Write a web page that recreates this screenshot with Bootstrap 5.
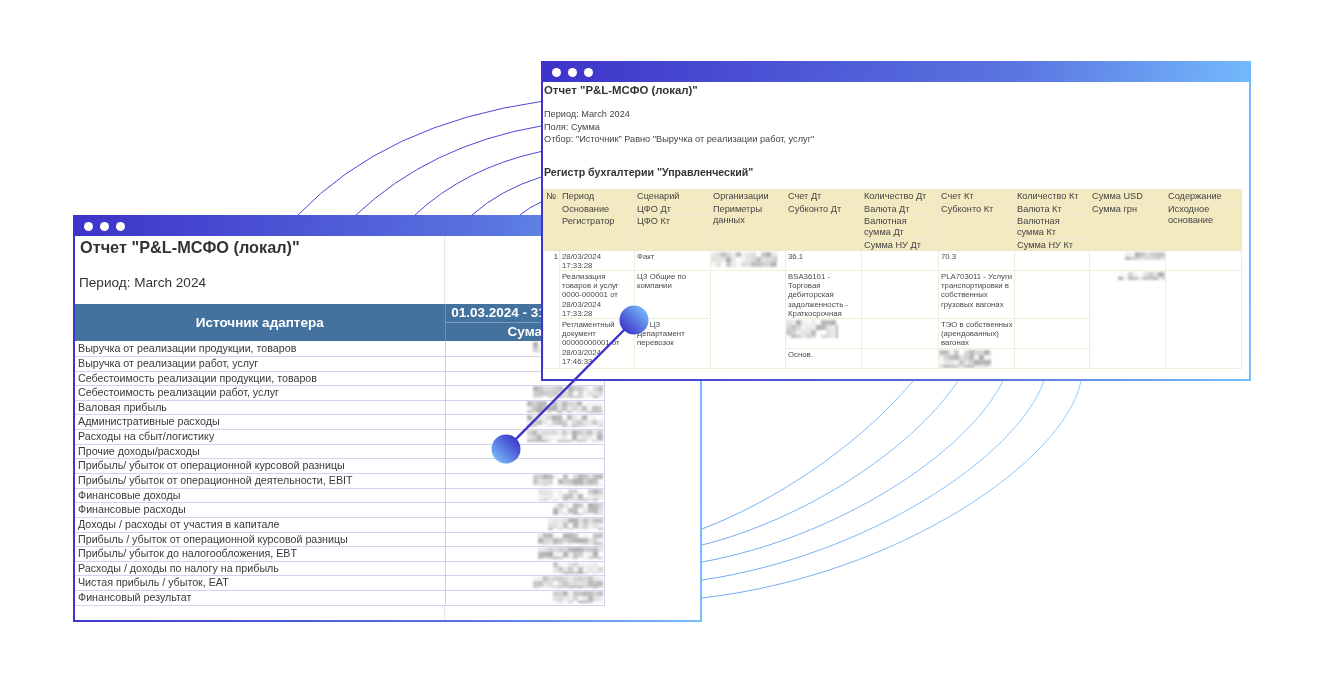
<!DOCTYPE html>
<html lang="ru">
<head>
<meta charset="utf-8">
<title>Отчет P&amp;L-МСФО</title>
<link href="https://cdn.jsdelivr.net/npm/bootstrap@5.3.0/dist/css/bootstrap.min.css" rel="stylesheet">
<style>
html,body{height:100%;margin:0;background:#fff;overflow:hidden}
body{font-family:"Liberation Sans",Arial,sans-serif;color:#333}
.stage{width:1324px;height:691px}
.wires{left:0;top:0;z-index:0}
.wires-top{left:0;top:0;z-index:5;pointer-events:none}
.win{background:linear-gradient(94deg,#3d33c9 0%,#5a75e0 65%,#76bfff 100%);padding:0 2px 2px}
.win-a{left:73px;top:215px;width:629px;height:407px;z-index:1}
.win-b{left:541px;top:61px;width:710px;height:320px;z-index:2}
.titlebar{height:21px;padding:1px 0 0 9px;gap:7px}
.win-dot{width:9px;height:9px;border-radius:50%;background:#fff}
.win-body{background:#fff;height:calc(100% - 21px);overflow:hidden}
.soft{filter:blur(.3px)}
.a-head{height:68px;color:#333}
.a-headl{width:370px;border-right:1px solid #e4e4ee;padding:2px 0 0 5px}
.a-title{font-size:16.3px;font-weight:700;line-height:19px;margin:0}
.a-period{font-size:13.6px;line-height:17px;margin:17px 0 0 -1px}
.a-table{table-layout:fixed;width:529px;font-size:10.7px;line-height:13px}
.a-table th{background:#44729f;color:#fff;font-weight:700;font-size:13.5px;text-align:center;line-height:17px;padding:0}
.a-table .th-top{height:18px;border-bottom:1px solid #7a9cbd}
.a-table .th-sub{height:19px}
.a-table .th-name{border-right:1px solid #6d92b5}
.a-table td{height:15px;padding:0 0 0 3px;border-bottom:1px solid #d2d2ea;white-space:nowrap;overflow:hidden;color:#3a3a3a}
.a-table tbody tr:nth-child(3) td,.a-table tbody tr:nth-child(5) td,.a-table tbody tr:nth-child(8) td,.a-table tbody tr:nth-child(11) td,.a-table tbody tr:nth-child(14) td,.a-table tbody tr:nth-child(16) td{height:14px}
.a-table td.val{border-left:1px solid #cfcfe6;border-right:1px solid #cfcfe6;padding:0 1px 0 0;text-align:right}
.a-foot{width:370px;border-right:1px solid #e4e4ee}
.b-body{color:#444;padding:0}
.b-title{font-size:11.4px;font-weight:700;line-height:14px;margin:1px 0 0 1px;color:#333}
.b-lines{font-size:9.2px;line-height:12.5px;margin:11px 0 0 1px}
.b-lines p{margin:0}
.b-reg{font-size:10.6px;font-weight:700;line-height:14px;margin:19px 0 0 1px;color:#333}
.b-table{table-layout:fixed;width:698px;margin-top:10px;border-collapse:collapse}
.b-table th,.b-table td{border:1px solid #ece6cc;vertical-align:top;padding:0 0 0 2px;overflow:hidden;white-space:nowrap}
.b-table th{background:#f3eac2;font-weight:400;font-size:9.2px;line-height:11px;color:#444}
.b-table td{font-size:7.8px;line-height:9.2px;color:#4a4a4a;border-color:#f0edda;padding-top:1px}
.h1{height:14px}.h2{height:12px}.h3{height:24px}.h4{height:11px}
.b-table .h1 th{padding-top:1px}
.b-table .h4 th{line-height:10px}
.r1{height:20px}.r2{height:48px}.r3{height:29px}.r4{height:20px}
.num{text-align:right}
.b-table td.num{padding-right:1px}
.b-table td.cell-smear{padding:1px 0 0}
.b-table td.cell-smear-r{padding:1px 0 0;text-align:right}
.smear{display:inline-block;vertical-align:top;filter:blur(.9px);overflow:hidden}
.smear i{display:block;float:left;width:5px;height:5px}
</style>
</head>
<body>
<div class="stage position-relative">

<svg class="wires position-absolute" width="1324" height="691" fill="none">
  <defs>
    <linearGradient id="wl" gradientUnits="userSpaceOnUse" x1="702" y1="600" x2="1081" y2="381">
      <stop offset="0" stop-color="#74a6ec"/><stop offset="1" stop-color="#93d1ff"/>
    </linearGradient>
  </defs>
  <g stroke="#4c48d8" stroke-width="1">
    <path d="M298 215Q385 124 541 101.5"/>
    <path d="M356 215Q430 145 541 126"/>
    <path d="M415 215Q465 168 541 151.5"/>
    <path d="M472 215Q500 190 541 177"/>
    <path d="M520 215Q528 208 541 202"/>
  </g>
  <g stroke="url(#wl)" stroke-width="1">
    <path d="M913 381C855 450 770 503 702 529"/>
    <path d="M958 381C910 452 802 520 702 545"/>
    <path d="M1003 381C966 455 835 538 702 562"/>
    <path d="M1044 381C1017 457 867 556 702 580"/>
    <path d="M1081 381C1065 460 900 575 702 598"/>
  </g>
</svg>

<section class="win win-a position-absolute">
  <div class="titlebar d-flex align-items-center"><span class="win-dot"></span><span class="win-dot"></span><span class="win-dot"></span></div>
  <div class="win-body soft d-flex flex-column">
    <div class="a-head d-flex flex-shrink-0">
      <div class="a-headl">
        <h1 class="a-title">Отчет "P&amp;L-МСФО (локал)"</h1>
        <p class="a-period">Период: March 2024</p>
      </div>
    </div>
    <table class="a-table flex-shrink-0">
      <colgroup><col style="width:370px"><col style="width:159px"></colgroup>
      <thead>
        <tr><th rowspan="2" class="th-name">Источник адаптера</th><th class="th-top">01.03.2024 - 31.03.2024</th></tr>
        <tr><th class="th-sub">Сума</th></tr>
      </thead>
      <tbody>
        <tr><td>Выручка от реализации продукции, товаров</td><td class="val"><span class="smear" data-w="70" data-h="12"></span></td></tr>
        <tr><td>Выручка от реализации работ, услуг</td><td class="val"></td></tr>
        <tr><td>Себестоимость реализации продукции, товаров</td><td class="val"></td></tr>
        <tr><td>Себестоимость реализации работ, услуг</td><td class="val"><span class="smear" data-w="70" data-h="12"></span></td></tr>
        <tr><td>Валовая прибыль</td><td class="val"><span class="smear" data-w="76" data-h="12"></span></td></tr>
        <tr><td>Административные расходы</td><td class="val"><span class="smear" data-w="76" data-h="12"></span></td></tr>
        <tr><td>Расходы на сбыт/логистику</td><td class="val"><span class="smear" data-w="76" data-h="12"></span></td></tr>
        <tr><td>Прочие доходы/расходы</td><td class="val"></td></tr>
        <tr><td>Прибыль/ убыток от операционной курсовой разницы</td><td class="val"></td></tr>
        <tr><td>Прибыль/ убыток от операционной деятельности, EBIT</td><td class="val"><span class="smear" data-w="70" data-h="12"></span></td></tr>
        <tr><td>Финансовые доходы</td><td class="val"><span class="smear" data-w="65" data-h="12"></span></td></tr>
        <tr><td>Финансовые расходы</td><td class="val"><span class="smear" data-w="50" data-h="12"></span></td></tr>
        <tr><td>Доходы / расходы от участия в капитале</td><td class="val"><span class="smear" data-w="55" data-h="12"></span></td></tr>
        <tr><td>Прибыль / убыток от операционной курсовой разницы</td><td class="val"><span class="smear" data-w="65" data-h="12"></span></td></tr>
        <tr><td>Прибыль/ убыток до налогообложения, EBT</td><td class="val"><span class="smear" data-w="65" data-h="12"></span></td></tr>
        <tr><td>Расходы / доходы по налогу на прибыль</td><td class="val"><span class="smear" data-w="50" data-h="12"></span></td></tr>
        <tr><td>Чистая прибыль / убыток, EAT</td><td class="val"><span class="smear" data-w="70" data-h="12"></span></td></tr>
        <tr><td>Финансовый результат</td><td class="val"><span class="smear" data-w="50" data-h="12"></span></td></tr>
      </tbody>
    </table>
    <div class="a-foot flex-grow-1"></div>
  </div>
</section>

<section class="win win-b position-absolute">
  <div class="titlebar d-flex align-items-center"><span class="win-dot"></span><span class="win-dot"></span><span class="win-dot"></span></div>
  <div class="win-body soft b-body">
    <h2 class="b-title">Отчет "P&amp;L-МСФО (локал)"</h2>
    <div class="b-lines">
      <p>Период: March 2024</p>
      <p>Поля: Сумма</p>
      <p>Отбор: "Источник" Равно "Выручка от реализации работ, услуг"</p>
    </div>
    <h3 class="b-reg">Регистр бухгалтерии "Управленческий"</h3>
    <table class="b-table">
      <colgroup>
        <col style="width:16px"><col style="width:75px"><col style="width:76px"><col style="width:75px"><col style="width:76px">
        <col style="width:77px"><col style="width:76px"><col style="width:75px"><col style="width:76px"><col style="width:76px">
      </colgroup>
      <thead>
        <tr class="h1"><th rowspan="4">№</th><th>Период</th><th>Сценарий</th><th>Организации</th><th>Счет Дт</th><th>Количество Дт</th><th>Счет Кт</th><th>Количество Кт</th><th>Сумма USD</th><th>Содержание</th></tr>
        <tr class="h2"><th>Основание</th><th>ЦФО Дт</th><th rowspan="3">Периметры<br>данных</th><th rowspan="3">Субконто Дт</th><th>Валюта Дт</th><th rowspan="3">Субконто Кт</th><th>Валюта Кт</th><th rowspan="3">Сумма грн</th><th rowspan="3">Исходное<br>основание</th></tr>
        <tr class="h3"><th rowspan="2">Регистратор</th><th rowspan="2">ЦФО Кт</th><th>Валютная<br>сумма Дт</th><th>Валютная<br>сумма Кт</th></tr>
        <tr class="h4"><th>Сумма НУ Дт</th><th>Сумма НУ Кт</th></tr>
      </thead>
      <tbody>
        <tr class="r1"><td rowspan="4" class="num">1</td><td>28/03/2024<br>17:33:28</td><td>Факт</td><td class="cell-smear"><span class="smear" data-w="66" data-h="15"></span></td><td>36.1</td><td></td><td>70.3</td><td></td><td class="cell-smear-r"><span class="smear" data-w="40" data-h="8"></span></td><td></td></tr>
        <tr class="r2"><td>Реализация<br>товаров и услуг<br>0000-000001 от<br>28/03/2024<br>17:33:28</td><td>ЦЗ Общие по<br>компании</td><td rowspan="3"></td><td>BSA36101 -<br>Торговая<br>дебиторская<br>задолженность -<br>Краткосрочная</td><td></td><td>PLA703011 - Услуги<br>транспортировки в<br>собственных<br>грузовых вагонах</td><td></td><td rowspan="3" class="cell-smear-r"><span class="smear" data-w="47" data-h="8"></span></td><td rowspan="3"></td></tr>
        <tr class="r3"><td rowspan="2">Регламентный<br>документ<br>00000000001 от<br>28/03/2024<br>17:46:33</td><td rowspan="2">ЦЗ ЦЗ<br>Департамент<br>перевозок</td><td class="cell-smear"><span class="smear" data-w="52" data-h="18"></span></td><td></td><td>ТЭО в собственных<br>(арендованных)<br>вагонах</td><td></td></tr>
        <tr class="r4"><td>Основ.</td><td></td><td class="cell-smear"><span class="smear" data-w="52" data-h="18"></span></td><td></td></tr>
      </tbody>
    </table>
  </div>
</section>

<svg class="wires-top position-absolute" width="1324" height="691">
  <defs>
    <linearGradient id="dotA" x1="1" y1="0" x2="0" y2="1">
      <stop offset=".1" stop-color="#3a2fc7"/><stop offset=".95" stop-color="#7cc6ff"/>
    </linearGradient>
    <linearGradient id="dotB" x1="0" y1="1" x2="1" y2="0">
      <stop offset=".1" stop-color="#3a2fc7"/><stop offset=".95" stop-color="#7cc6ff"/>
    </linearGradient>
  </defs>
  <line x1="506" y1="449" x2="634" y2="320" stroke="#3d34c8" stroke-width="2.4"/>
  <circle cx="506" cy="449" r="14.5" fill="url(#dotA)"/>
  <circle cx="634" cy="320" r="14.5" fill="url(#dotB)"/>
</svg>
</div>
<script src="https://cdn.jsdelivr.net/npm/bootstrap@5.3.0/dist/js/bootstrap.bundle.min.js"></script>
<script>
/* deterministic pixel mosaic for the censored values */
var seed=7;function rnd(){seed=(seed*16807)%2147483647;return seed/2147483647}
document.querySelectorAll('.smear').forEach(function(s){
  var w=+s.dataset.w,h=+s.dataset.h,cols=Math.ceil(w/5),rows=Math.ceil(h/5),html='';
  for(var i=0;i<cols*rows;i++){var g=Math.round(175+rnd()*80);
    html+='<i style="background:rgb('+g+','+g+','+g+')"></i>';}
  s.style.width=w+'px';s.style.height=h+'px';s.innerHTML='<b class="d-block" style="width:'+(cols*5)+'px">'+html+'</b>';
});
</script>
</body>
</html>
